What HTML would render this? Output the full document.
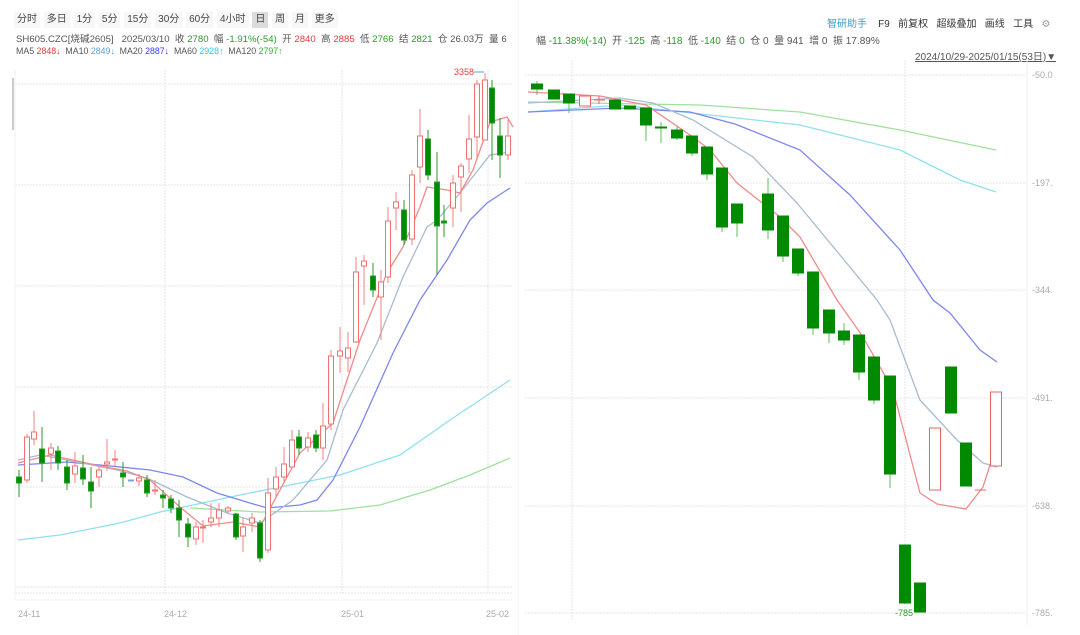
<!DOCTYPE html>
<html><head><meta charset="utf-8"><style>
*{margin:0;padding:0;box-sizing:border-box}
body{width:1080px;height:635px;background:#fff;position:relative;overflow:hidden;font-family:"Liberation Sans","Noto Sans CJK SC",sans-serif;font-size:10px;color:#555}
.t{position:absolute;white-space:nowrap;overflow:hidden}
.r{color:#e23b3b}.g{color:#2a9a2a}.b{color:#5aa0d8}.bl{color:#3a3aff}.c{color:#2fc4e0}.lg{color:#32b032}
.tabs span{display:inline-block;padding:0 3px;height:16px;line-height:16px;background:#f7f7f7;margin-right:1px;color:#444}
.tabs span.on{background:#dcdcdc}
svg{position:absolute;left:0;top:0}
</style></head><body>
<div class="t tabs" style="left:14px;top:12px;font-size:10px"><span>分时</span> <span>多日</span> <span>1分</span> <span>5分</span> <span>15分</span> <span>30分</span> <span>60分</span> <span>4小时</span> <span class="on">日</span> <span>周</span> <span>月</span> <span>更多</span></div>
<div class="t" style="left:16px;top:31px;width:500px;font-size:9.6px">SH605.CZC[烧碱2605]&nbsp;&nbsp;&nbsp;2025/03/10&nbsp;&nbsp;收 <span class="g">2780</span>&nbsp;&nbsp;幅 <span class="g">-1.91%(-54)</span>&nbsp;&nbsp;开 <span class="r">2840</span>&nbsp;&nbsp;高 <span class="r">2885</span>&nbsp;&nbsp;低 <span class="g">2766</span>&nbsp;&nbsp;结 <span class="g">2821</span>&nbsp;&nbsp;仓 26.03万&nbsp;&nbsp;量 6</div>
<div class="t" style="left:16px;top:46px;font-size:8.8px">MA5 <span class="r">2848↓</span>&nbsp; MA10 <span class="b">2849↓</span>&nbsp; MA20 <span class="bl">2887↓</span>&nbsp; MA60 <span class="c">2928↑</span>&nbsp; MA120 <span class="lg">2797↑</span></div>
<div class="t" style="left:827px;top:15px;color:#333"><span style="color:#3aa0c8">智研助手</span>&nbsp;&nbsp;&nbsp;&nbsp;F9&nbsp;&nbsp;&nbsp;前复权&nbsp;&nbsp;&nbsp;超级叠加&nbsp;&nbsp;&nbsp;画线&nbsp;&nbsp;&nbsp;工具&nbsp;&nbsp;&nbsp;<span style="color:#999">⚙</span></div>
<div class="t" style="left:536px;top:32px">幅 <span class="g">-11.38%(-14)</span>&nbsp;&nbsp;开 <span class="g">-125</span>&nbsp;&nbsp;高 <span class="g">-118</span>&nbsp;&nbsp;低 <span class="g">-140</span>&nbsp;&nbsp;结 <span class="g">0</span>&nbsp;&nbsp;仓 0&nbsp;&nbsp;量 941&nbsp;&nbsp;增 0&nbsp;&nbsp;振 17.89%</div>
<div class="t" style="left:915px;top:48px;text-decoration:underline;color:#555">2024/10/29-2025/01/15(53日)<span style="text-decoration:none">▼</span></div>
<svg width="1080" height="635" font-family="Liberation Sans,sans-serif" font-size="9">
<g stroke="#e6e6e6" stroke-dasharray="2,1" stroke-width="1">
<line x1="15" y1="84" x2="512" y2="84"/><line x1="15" y1="185" x2="512" y2="185"/><line x1="15" y1="286" x2="512" y2="286"/><line x1="15" y1="387" x2="512" y2="387"/><line x1="15" y1="487" x2="512" y2="487"/><line x1="15" y1="587" x2="512" y2="587"/><line x1="15" y1="593" x2="512" y2="593"/>
<line x1="165" y1="70" x2="165" y2="593"/><line x1="342" y1="70" x2="342" y2="593"/><line x1="488" y1="70" x2="488" y2="593"/>
<line x1="525" y1="75" x2="1027" y2="75"/><line x1="525" y1="183" x2="1027" y2="183"/><line x1="525" y1="290" x2="1027" y2="290"/><line x1="525" y1="398" x2="1027" y2="398"/><line x1="525" y1="506" x2="1027" y2="506"/><line x1="525" y1="613" x2="1027" y2="613"/>
<line x1="572" y1="60" x2="572" y2="620"/><line x1="905" y1="60" x2="905" y2="620"/>
</g>
<line x1="15" y1="70" x2="15" y2="600" stroke="#f0f0f0"/>
<line x1="13" y1="78" x2="13" y2="130" stroke="#ccc" stroke-width="2"/>
<line x1="1027" y1="60" x2="1027" y2="625" stroke="#eee"/>
<line x1="15" y1="600" x2="512" y2="600" stroke="#f2f2f2"/>
<line x1="518" y1="0" x2="518" y2="635" stroke="#f2f2f2"/>
<g fill="#aaa"><text x="18" y="617">24-11</text><text x="164" y="617">24-12</text><text x="341" y="617">25-01</text><text x="486" y="617">25-02</text>
<text x="1032" y="78">-50.0</text><text x="1032" y="186">-197.</text><text x="1032" y="293">-344.</text><text x="1032" y="401">-491.</text><text x="1032" y="509">-638.</text><text x="1032" y="616">-785.</text></g>
<text x="454" y="75" fill="#e23b3b">3358</text><line x1="474" y1="72" x2="484" y2="72" stroke="#5aa0d8"/>
<text x="895" y="616" fill="#2a9a2a">-785</text>
<g fill="none" stroke-width="1.3">
<polyline stroke="#9fe09f" points="190,508 260,512 330,511 380,505 430,490 470,475 510,458"/>
<polyline stroke="#8fe0f0" points="18,540 60,535 120,523 160,512 240,495 290,485 340,475 400,455 450,420 480,400 510,380"/>
<polyline stroke="#7d86f0" points="18,465 67,462 100,465 150,470 183,477 217,493 250,503 267,508 300,505 317,500 333,480 360,427 393,353 420,300 447,260 470,220 487,203 510,188"/>
<polyline stroke="#a8bcd0" points="18,460 40,455 67,460 117,470 147,478 187,497 227,513 260,523 293,500 327,460 343,410 377,343 403,277 427,227 437,220 460,193 490,155 510,152"/>
<polyline stroke="#f08a8a" points="18,463 50,455 100,466 127,471 150,480 180,507 203,526 233,522 260,527 300,453 333,423 360,340 387,273 403,247 420,207 427,187 447,190 460,193 473,170 490,122 507,117 513,127"/>
</g>
<g fill="none" stroke-width="1.3">
<polyline stroke="#9fe09f" points="528,102 700,105 800,112 900,130 996,150"/>
<polyline stroke="#8fe0f0" points="528,112 620,105 800,125 900,150 960,180 996,192"/>
<polyline stroke="#7d86f0" points="528,112 620,108 690,112 735,124 800,150 850,195 900,250 933,300 950,313 980,350 997,362"/>
<polyline stroke="#a8bcd0" points="528,103 620,98 653,103 693,120 753,157 797,203 840,255 877,300 890,320 920,400 957,440 983,463 997,467"/>
<polyline stroke="#f08a8a" points="528,92 600,96 646,105 693,137 710,150 737,183 780,217 800,237 837,300 863,337 893,390 920,493 937,504 966,509 983,487 997,443"/>
</g>
<g stroke-width="1">
<path stroke="#2a9a2a" d="M19,470V497M42,427V482M58,446V470M67,460V490M83,455V485M91,467V508M123,462V487M147,475V497M163,490V508M171,495V513M179,500V537M188,518V547M236,513V540M260,520V562M299,430V455M316,430V452M373,263V297M404,200V245M428,130V180M437,152V275M444,205V237M492,80V160M500,118V178"/>
<path stroke="#f08080" d="M27,434V483M34,411V445M51,443V470M75,452V483M99,465V487M107,439V471M115,450V467M139,474V486M155,480V495M196,522V545M203,520V543M211,503V527M219,503V527M228,506V513M243,518V552M252,513V532M268,478V553M276,467V497M284,447V483M292,430V458M308,432V452M323,403V460M331,350V430M340,327V373M348,332V372M356,257V343M364,255V305M381,270V340M388,207V283M396,192V230M412,170V245M420,109V183M453,175V227M461,163V212M469,115V173M477,80V160M485,73V140M508,120V160"/>
<g fill="#008a00" stroke="#2a9a2a">
<rect x="16.5" y="477" width="5" height="6"/><rect x="39.5" y="449" width="5" height="14"/><rect x="55.5" y="451" width="5" height="12"/><rect x="64.5" y="467" width="5" height="16"/><rect x="80.5" y="468" width="5" height="11"/><rect x="88.5" y="482" width="5" height="9"/><rect x="120.5" y="473" width="5" height="4"/><rect x="144.5" y="480" width="5" height="13"/><rect x="160.5" y="495" width="5" height="3"/><rect x="168.5" y="499" width="5" height="9"/><rect x="176.5" y="508" width="5" height="12"/><rect x="185.5" y="524" width="5" height="13"/><rect x="233.5" y="514" width="5" height="23"/><rect x="257.5" y="523" width="5" height="35"/><rect x="296.5" y="437" width="5" height="11"/><rect x="313.5" y="435" width="5" height="13"/><rect x="370.5" y="276" width="5" height="14"/><rect x="401.5" y="210" width="5" height="30"/><rect x="425.5" y="139" width="5" height="36"/><rect x="434.5" y="182" width="5" height="44"/><rect x="441.5" y="221" width="5" height="2"/><rect x="489.5" y="88" width="5" height="35"/><rect x="497.5" y="136" width="5" height="19"/>
<rect x="128.5" y="480" width="5" height="1" stroke="#7aa0e0"/>
</g>
<g fill="#fff" stroke="#f07070">
<rect x="24.5" y="437" width="5" height="43"/><rect x="31.5" y="432" width="5" height="7"/><rect x="48.5" y="448" width="5" height="6"/><rect x="72.5" y="466" width="5" height="8"/><rect x="96.5" y="470" width="5" height="7"/><rect x="104.5" y="462" width="5" height="2"/><rect x="112.5" y="459" width="5" height="1"/><rect x="136.5" y="478" width="5" height="3"/><rect x="152.5" y="490" width="5" height="1"/><rect x="193.5" y="527" width="5" height="12"/><rect x="200.5" y="527" width="5" height="1"/><rect x="208.5" y="518" width="5" height="4"/><rect x="216.5" y="510" width="5" height="8"/><rect x="225.5" y="508" width="5" height="3"/><rect x="240.5" y="527" width="5" height="9"/><rect x="249.5" y="518" width="5" height="5"/><rect x="265.5" y="493" width="5" height="57"/><rect x="273.5" y="477" width="5" height="12"/><rect x="281.5" y="464" width="5" height="13"/><rect x="289.5" y="440" width="5" height="27"/><rect x="305.5" y="438" width="5" height="9"/><rect x="320.5" y="426" width="5" height="22"/><rect x="328.5" y="356" width="5" height="68"/><rect x="337.5" y="351" width="5" height="5"/><rect x="345.5" y="348" width="5" height="10"/><rect x="353.5" y="272" width="5" height="70"/><rect x="361.5" y="261" width="5" height="5"/><rect x="378.5" y="282" width="5" height="15"/><rect x="385.5" y="221" width="5" height="56"/><rect x="393.5" y="202" width="5" height="6"/><rect x="409.5" y="175" width="5" height="64"/><rect x="417.5" y="136" width="5" height="31"/><rect x="450.5" y="183" width="5" height="25"/><rect x="458.5" y="166" width="5" height="11"/><rect x="466.5" y="139" width="5" height="20"/><rect x="474.5" y="84" width="5" height="53"/><rect x="482.5" y="80" width="5" height="60"/><rect x="505.5" y="136" width="5" height="19"/>
</g>
</g>
<g stroke-width="1">
<path stroke="#5cc05c" d="M537,81V95M569,94V113M646,108V141M661,122V143M677,126V140M692,136V156M707,147V180M722,168V232M737,204V237M768,178V239M783,216V262M798,249V276M813,272V335M829,310V343M844,323V345M859,347V380M874,357V404M890,376V488M905,545V604"/>
<g fill="#008a00" stroke="#008a00">
<rect x="531.5" y="84" width="11" height="5"/><rect x="548.5" y="90" width="11" height="9"/><rect x="563.5" y="94" width="11" height="9"/><rect x="609.5" y="100" width="11" height="9"/><rect x="624.5" y="106" width="11" height="3"/><rect x="640.5" y="108" width="11" height="17"/><rect x="655.5" y="127" width="11" height="1"/><rect x="671.5" y="130" width="11" height="8"/><rect x="686.5" y="136" width="11" height="17"/><rect x="701.5" y="147" width="11" height="27"/><rect x="716.5" y="168" width="11" height="59"/><rect x="731.5" y="204" width="11" height="19"/><rect x="762.5" y="194" width="11" height="36"/><rect x="777.5" y="216" width="11" height="40"/><rect x="792.5" y="249" width="11" height="24"/><rect x="807.5" y="272" width="11" height="56"/><rect x="823.5" y="310" width="11" height="23"/><rect x="838.5" y="331" width="11" height="9"/><rect x="853.5" y="335" width="11" height="37"/><rect x="868.5" y="357" width="11" height="43"/><rect x="884.5" y="376" width="11" height="98"/><rect x="899.5" y="545" width="11" height="58"/><rect x="914.5" y="583" width="11" height="29"/><rect x="945.5" y="367" width="11" height="46"/><rect x="960.5" y="443" width="11" height="43"/>
</g>
<g fill="#fff" stroke="#f06060">
<rect x="579.5" y="96" width="11" height="10"/><rect x="929.5" y="428" width="11" height="62"/><rect x="990.5" y="392" width="11" height="74"/>
</g>
<path stroke="#f06060" d="M594,100H605M599,96V104M975,490H986"/>
</g>
</svg>
</body></html>
